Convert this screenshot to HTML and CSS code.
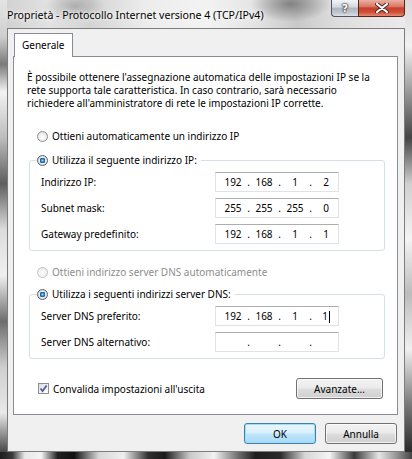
FILE: index.html
```html
<!DOCTYPE html>
<html lang="it">
<head>
<meta charset="utf-8">
<title>Proprietà - Protocollo Internet versione 4 (TCP/IPv4)</title>
<link rel="stylesheet" href="styles.css">
</head>
<body>
<div class="window">
  <div class="titlebar">
    <span class="title">Proprietà - Protocollo Internet versione 4 (TCP/IPv4)</span>
    <div class="caption-btns">
      <div class="cap cap-help">?</div>
      <div class="cap cap-close">
        <svg width="14" height="10" viewBox="0 0 14 10"><path d="M2 1 L12 9 M12 1 L2 9" stroke="#4a2a25" stroke-width="4" stroke-linecap="round"/><path d="M2 1 L12 9 M12 1 L2 9" stroke="#fff" stroke-width="2.2" stroke-linecap="round"/></svg>
      </div>
    </div>
  </div>
  <div class="client">
    <div class="tabs"><div class="tab">Generale</div></div>
    <div class="panel">
      <p class="intro">È possibile ottenere l'assegnazione automatica delle impostazioni IP se la rete supporta tale caratteristica. In caso contrario, sarà necessario richiedere all'amministratore di rete le impostazioni IP corrette.</p>

      <div class="radio first-radio"><span class="rb"></span><span>Ottieni automaticamente un indirizzo IP</span></div>

      <fieldset class="group">
        <legend class="radio"><span class="rb checked"></span><span>Utilizza il seguente indirizzo IP:</span></legend>
        <div class="rows">
          <div class="field"><span>Indirizzo IP:</span><div class="ip"><span class="oct">192</span><span class="dot">.</span><span class="oct">168</span><span class="dot">.</span><span class="oct">1</span><span class="dot">.</span><span class="oct">2</span></div></div>
          <div class="field"><span>Subnet mask:</span><div class="ip"><span class="oct">255</span><span class="dot">.</span><span class="oct">255</span><span class="dot">.</span><span class="oct">255</span><span class="dot">.</span><span class="oct">0</span></div></div>
          <div class="field"><span>Gateway predefinito:</span><div class="ip"><span class="oct">192</span><span class="dot">.</span><span class="oct">168</span><span class="dot">.</span><span class="oct">1</span><span class="dot">.</span><span class="oct">1</span></div></div>
        </div>
      </fieldset>

      <div class="radio disabled dns-auto"><span class="rb"></span><span>Ottieni indirizzo server DNS automaticamente</span></div>

      <fieldset class="group group-dns">
        <legend class="radio"><span class="rb checked"></span><span>Utilizza i seguenti indirizzi server DNS:</span></legend>
        <div class="rows">
          <div class="field"><span>Server DNS preferito:</span><div class="ip"><span class="oct">192</span><span class="dot">.</span><span class="oct">168</span><span class="dot">.</span><span class="oct">1</span><span class="dot">.</span><span class="oct">1<span class="caret"></span></span></div></div>
          <div class="field"><span>Server DNS alternativo:</span><div class="ip"><span class="oct"></span><span class="dot">.</span><span class="oct"></span><span class="dot">.</span><span class="oct"></span><span class="dot">.</span><span class="oct"></span></div></div>
        </div>
      </fieldset>

      <div class="panel-footer">
        <div class="check">
          <span class="cb"><svg width="9" height="9" viewBox="0 0 9 9"><path d="M1.5 4.5 L3.6 7 L7.6 1.5" fill="none" stroke="#4b5b9c" stroke-width="1.7"/></svg></span>
          <span>Convalida impostazioni all'uscita</span>
        </div>
        <button class="btn btn-adv">Avanzate...</button>
      </div>
    </div>
    <div class="dialog-buttons">
      <button class="btn btn-default">OK</button>
      <button class="btn">Annulla</button>
    </div>
  </div>
</div>
</body>
</html>
```

FILE: styles.css
```css
html, body {
  margin: 0;
  padding: 0;
}
body {
  width: 412px;
  height: 459px;
  overflow: hidden;
  font-family: "Noto Sans", "Open Sans", sans-serif;
  font-size: 10px;
  color: #000;
}
.window {
  width: 412px;
  height: 459px;
  box-sizing: border-box;
  padding: 0 7px 7px 7px;
  display: flex;
  flex-direction: column;
  background:
    linear-gradient(90deg, #1c1c1c 0%, #3a3a3a 3%, #e8e8e8 6%, #f4f4f4 10%, #202020 14%, #111 18%, #d8d8d8 24%, #efefef 30%, #303030 36%, #1a1a1a 40%, #c8c8c8 46%, #f2f2f2 52%, #6a6a6a 58%, #1e1e1e 62%, #2a2a2a 68%, #d6d6d6 74%, #f5f5f5 80%, #3a3a3a 86%, #e6e6e6 92%, #9a9a9a 96%, #444 100%) left bottom / 100% 7px no-repeat,
    linear-gradient(180deg, #e4e4e4 0%, #cfcfcf 8%, #7a7a7a 14%, #f2f2f2 20%, #bdbdbd 30%, #5e5e5e 40%, #dcdcdc 50%, #f0f0f0 60%, #6d6d6d 70%, #cfcfcf 80%, #e9e9e9 90%, #2a2a2a 100%) left top / 7px 100% no-repeat,
    linear-gradient(180deg, #d9d9d9 0%, #f2f2f2 10%, #9a9a9a 20%, #444 30%, #cfcfcf 40%, #f4f4f4 52%, #bcbcbc 64%, #f0f0f0 76%, #7a7a7a 88%, #1e1e1e 100%) right top / 7px 100% no-repeat,
    radial-gradient(ellipse 40px 18px at 290px 4px, rgba(70,70,70,0.55), rgba(70,70,70,0) 100%),
    radial-gradient(ellipse 30px 16px at 75px 6px, rgba(110,110,110,0.4), rgba(110,110,110,0) 100%),
    linear-gradient(90deg, #cfcfcf 0%, #e2e2e2 12%, #d4d4d4 22%, #ececec 35%, #f3f3f3 50%, #e4e4e4 62%, #c9c9c9 72%, #dedede 82%, #ececec 100%);
}

/* Title bar */
.titlebar {
  height: 28px;
  display: flex;
  justify-content: space-between;
  align-items: flex-start;
  flex-shrink: 0;
}
.title {
  margin-top: 8px;
  font-size: 10.6px;
  line-height: 14px;
  text-shadow: 0 0 6px rgba(255,255,255,0.95), 0 0 3px rgba(255,255,255,0.9);
}
.caption-btns {
  display: flex;
}
.cap {
  height: 17px;
  box-sizing: border-box;
  border: 1px solid #4e5560;
  border-top: none;
  display: flex;
  align-items: center;
  justify-content: center;
}
.cap-help {
  width: 27px;
  border-radius: 0 0 0 4px;
  border-right: none;
  background: linear-gradient(180deg, #f2f4f7 0%, #d3d8de 45%, #aeb5be 50%, #c2c8cf 80%, #dde1e6 100%);
  color: #fff;
  font-family: "DejaVu Sans", sans-serif;
  font-weight: bold;
  font-size: 11px;
  text-shadow: 0 0 1px #333, 0 0 2px #333, 0 0 2px #333;
}
.cap-close {
  width: 47px;
  border-radius: 0 0 4px 0;
  border-color: #5a241c;
  background: linear-gradient(180deg, #eab0a2 0%, #db7a68 40%, #c6402c 50%, #cf4d38 75%, #e48a70 100%);
}

/* Client area */
.client {
  flex: 1;
  background: #f0f0f0;
  border: 1px solid #7c7c7c;
  padding: 4px 6px 7px 5px;
  display: flex;
  flex-direction: column;
}
.tabs {
  display: flex;
  position: relative;
  z-index: 1;
  margin-bottom: -1px;
}
.tab {
  margin-left: 1px;
  height: 23px;
  padding: 0 7px;
  border: 1px solid #898c95;
  border-bottom: none;
  background: #fff;
  display: flex;
  align-items: center;
  line-height: 13px;
}
.panel {
  flex: 1;
  background: #fff;
  border: 1px solid #898c95;
  padding: 0 12px 0 13px;
  display: flex;
  flex-direction: column;
}
.intro {
  margin: 14px 0 0 0;
  line-height: 13px;
}

/* Radios */
.radio {
  display: flex;
  align-items: center;
  gap: 4px;
  height: 14px;
  line-height: 14px;
}
.first-radio {
  margin: 19px 0 0 10px;
}
.dns-auto {
  margin: 14px 0 0 10px;
}
.rb {
  width: 11px;
  height: 11px;
  box-sizing: border-box;
  border-radius: 50%;
  border: 1px solid #8e8f8f;
  background: radial-gradient(circle at 50% 60%, #ffffff 0%, #f1f1f1 45%, #d0d0d0 100%);
  flex-shrink: 0;
}
.rb.checked {
  border-color: #5c5f64;
  background: radial-gradient(circle closest-side at 50% 50%, #a6e4ff 0%, #2f8fd6 30%, #0b4d8e 60%, #eef0f2 66%, #d6d8da 100%);
}
.radio.disabled {
  color: #8d8d8d;
}
.radio.disabled .rb {
  border-color: #c2c2c2;
  background: radial-gradient(circle at 50% 60%, #fbfbfb 0%, #f0f0f0 60%, #e2e2e2 100%);
}

/* Group boxes */
.group {
  margin: 10px 0 0 2px;
  padding: 0;
  border: 1px solid #d5dfe5;
  border-radius: 3px;
  min-width: 0;
}
.group legend {
  margin-left: 7px;
  padding: 0 4px 0 0;
}
.group-dns {
  margin-top: 8px;
}
.rows {
  display: flex;
  flex-direction: column;
  gap: 6px;
  padding: 5px 45px 6px 11px;
}
.field {
  display: flex;
  justify-content: space-between;
  align-items: center;
}
.ip {
  width: 124px;
  height: 20px;
  box-sizing: border-box;
  border: 1px solid #dfe3e8;
  border-top-color: #abadb3;
  border-left-color: #e2e3ea;
  background: #fff;
  display: flex;
  align-items: center;
  padding-left: 5px;
}
.oct {
  width: 24px;
  text-align: center;
}
.dot {
  width: 7px;
  text-align: center;
}
.caret {
  display: inline-block;
  width: 1px;
  height: 12px;
  background: #000;
  vertical-align: middle;
  margin-left: 1px;
}

/* Footer */
.panel-footer {
  margin: 19px 2px 0 11px;
  display: flex;
  justify-content: space-between;
  align-items: center;
}
.check {
  display: flex;
  align-items: center;
  gap: 4px;
}
.cb {
  width: 11px;
  height: 11px;
  box-sizing: border-box;
  border: 1px solid #8f8f8f;
  background: linear-gradient(135deg, #dcdcdc 0%, #f6f6f6 70%, #ffffff 100%);
  display: flex;
  align-items: center;
  justify-content: center;
}
.cb svg {
  display: block;
}

/* Buttons */
.btn {
  height: 21px;
  box-sizing: border-box;
  font-family: inherit;
  font-size: inherit;
  color: #000;
  border: 1px solid #707070;
  border-radius: 3px;
  background: linear-gradient(180deg, #f2f2f2 0%, #ebebeb 48%, #dddddd 52%, #cfcfcf 100%);
  box-shadow: inset 0 0 0 1px rgba(255,255,255,0.7);
  padding: 0;
  width: 72px;
}
.btn-adv {
  width: 87px;
}
.btn-default {
  border-color: #3c7fb1;
  box-shadow: inset 0 0 0 1px #a6dcf7;
  background: linear-gradient(180deg, #eaf6fd 0%, #d9f0fc 48%, #bee6fd 52%, #a7d9f5 100%);
}
.dialog-buttons {
  margin-top: 8px;
  display: flex;
  justify-content: flex-end;
  gap: 9px;
  margin-right: 1px;
}
```
